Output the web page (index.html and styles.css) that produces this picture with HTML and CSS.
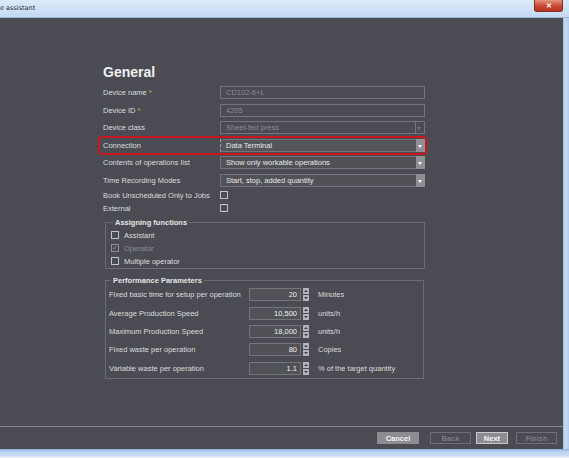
FILE: index.html
```html
<!DOCTYPE html>
<html lang="en">
<head>
    <meta charset="UTF-8">
    <title>Device assistant</title>
    <link rel="stylesheet" href="styles.css">
</head>
<body>

    <div class="titlebar">
        <span class="title">e assistant</span>
        <span class="close">&#x2715;</span>
    </div>

    <div class="middle">
        <div class="client">
            <div class="page">
                <h1>General</h1>

                <div class="row">
                    <label>Device name <span class="req">*</span></label>
                    <div class="field disabled">CD102-6+L</div>
                </div>
                <div class="row">
                    <label>Device ID <span class="req">*</span></label>
                    <div class="field disabled">4205</div>
                </div>
                <div class="row">
                    <label>Device class</label>
                    <div class="field select disabled">Sheet-fed press<span class="arrow"></span></div>
                </div>
                <div class="row flagged">
                    <label>Connection</label>
                    <div class="field select focus">Data Terminal<span class="arrow"></span></div>
                </div>
                <div class="row">
                    <label>Contents of operations list</label>
                    <div class="field select">Show only workable operations<span class="arrow"></span></div>
                </div>
                <div class="row last-field">
                    <label>Time Recording Modes</label>
                    <div class="field select">Start, stop, added quantity<span class="arrow"></span></div>
                </div>
                <div class="row check-row">
                    <label>Book Unscheduled Only to Jobs</label>
                    <span class="box"></span>
                </div>
                <div class="row check-row">
                    <label>External</label>
                    <span class="box"></span>
                </div>

                <fieldset class="group functions">
                    <legend>Assigning functions</legend>
                    <div class="check"><span class="box"></span>Assistant</div>
                    <div class="check dim"><span class="box checked">&#x2713;</span>Operator</div>
                    <div class="check"><span class="box"></span>Multiple operator</div>
                </fieldset>

                <fieldset class="group params">
                    <legend>Performance Parameters</legend>
                    <div class="param">
                        <label>Fixed basic time for setup per operation</label>
                        <div class="num">20</div>
                        <div class="spin"><span class="up"></span><span class="down"></span></div>
                        <span class="unit">Minutes</span>
                    </div>
                    <div class="param">
                        <label>Average Production Speed</label>
                        <div class="num">10,500</div>
                        <div class="spin"><span class="up"></span><span class="down"></span></div>
                        <span class="unit">units/h</span>
                    </div>
                    <div class="param">
                        <label>Maximum Production Speed</label>
                        <div class="num">18,000</div>
                        <div class="spin"><span class="up"></span><span class="down"></span></div>
                        <span class="unit">units/h</span>
                    </div>
                    <div class="param">
                        <label>Fixed waste per operation</label>
                        <div class="num">80</div>
                        <div class="spin"><span class="up"></span><span class="down"></span></div>
                        <span class="unit">Copies</span>
                    </div>
                    <div class="param">
                        <label>Variable waste per operation</label>
                        <div class="num">1.1</div>
                        <div class="spin"><span class="up"></span><span class="down"></span></div>
                        <span class="unit">% of the target quantity</span>
                    </div>
                </fieldset>
            </div>

            <div class="footer">
                <button class="btn filled cancel">Cancel</button>
                <button class="btn ghost back">Back</button>
                <button class="btn filled next">Next</button>
                <button class="btn ghost finish">Finish</button>
            </div>
        </div>
        <div class="frame-right"></div>
    </div>

    <div class="frame-bottom"></div>

</body>
</html>
```

FILE: styles.css
```css
body {
    margin: 0;
    width: 569px;
    height: 458px;
    overflow: hidden;
    display: flex;
    flex-direction: column;
    font-family: "Liberation Sans", Arial, sans-serif;
    font-size: 7.5px;
    color: #dcdcdc;
    background-color: #bcd4f0;
}

/* window chrome */
.titlebar {
    height: 17px;
    flex: none;
    display: flex;
    align-items: center;
    justify-content: space-between;
    padding-right: 6px;
    background: linear-gradient(to bottom, #dceafa, #c3d9f3);
    border-bottom: 1px solid #9fb8d6;
}

.title {
    color: #1e2a3a;
    font-family: "DejaVu Sans", sans-serif;
    font-size: 6.5px;
    margin-bottom: 1px;
}

.close {
    align-self: flex-start;
    width: 27px;
    height: 11px;
    display: flex;
    align-items: center;
    justify-content: center;
    color: #fff;
    font-size: 7px;
    font-weight: bold;
    background: linear-gradient(to bottom, #e5957f, #c8452f 55%, #b8361f);
    border: 1px solid #7a2f22;
    border-top: none;
    border-radius: 0 0 3px 3px;
}

.middle {
    flex: 1;
    display: flex;
    min-height: 0;
}

.frame-right {
    width: 6px;
    background: linear-gradient(to right, #9fb8d6, #c6dbf3 30%, #b5cdea);
}

.frame-bottom {
    height: 9px;
    flex: none;
    background: linear-gradient(to bottom, #8fb0da, #bcd4f0 30%, #c7dbf3 70%, #f3f6fa);
}

.client {
    width: 563px;
    display: flex;
    flex-direction: column;
    background-color: #4b4b53;
}

/* page */
.page {
    flex: 1;
    min-height: 0;
    padding: 46px 0 0 103px;
}

h1 {
    margin: 0 0 6px;
    height: 16px;
    font-size: 14px;
    line-height: 16px;
    font-weight: bold;
    color: #f0f0f0;
}

.row {
    display: flex;
    align-items: center;
    height: 13px;
    width: 322px;
    margin-bottom: 4.6px;
}

.row.last-field {
    margin-bottom: 2px;
}

.row label {
    width: 117px;
    flex: none;
}

.req {
    color: #e0a53a;
}

.field {
    position: relative;
    width: 205px;
    height: 13px;
    box-sizing: border-box;
    padding-left: 5px;
    line-height: 11px;
    color: #e8e8e8;
    background-color: #515158;
    border: 1px solid #74747b;
}

.field.disabled {
    color: #8a8a90;
    background-color: #4b4b53;
}

.field.focus {
    border: 1px solid #74747b;
    border-left: 1px dashed #a0a0a6;
    background-color: #55555c;
}

.arrow {
    position: absolute;
    top: -1px;
    right: -1px;
    width: 9px;
    height: 13px;
    background-color: #8f8f95;
}

.arrow::after {
    content: "";
    position: absolute;
    left: 2px;
    top: 6px;
    border-left: 2.5px solid transparent;
    border-right: 2.5px solid transparent;
    border-top: 3px solid #fff;
}

.disabled .arrow {
    top: 0;
    right: 0;
    height: 11px;
    background-color: #4b4b53;
    border-left: 1px solid #74747b;
    box-sizing: border-box;
}

.disabled .arrow::after {
    border-top-color: #74747b;
    left: 1px;
    top: 5px;
}

.flagged {
    position: relative;
}

.flagged::after {
    content: "";
    position: absolute;
    top: -3px;
    bottom: -3px;
    left: -5px;
    right: -2px;
    border: 2px solid #c8171e;
    border-radius: 4px;
}

.check-row {
    margin-bottom: 0;
}

.box {
    width: 8px;
    height: 8px;
    box-sizing: border-box;
    border: 1px solid #c4c4c8;
    display: inline-flex;
    align-items: center;
    justify-content: center;
    flex: none;
}

/* group boxes */
.group {
    margin: 0 0 0 2px;
    width: 320px;
    box-sizing: border-box;
    border: 1px solid #6c6c73;
    padding: 0;
}

.group legend {
    padding: 0 2px;
    margin-left: 2px;
    font-weight: bold;
    line-height: 9px;
    color: #e6e6e6;
}

.functions {
    margin-top: 3px;
    padding: 2px 0 0 5px;
}

.check {
    display: flex;
    align-items: center;
    gap: 5px;
    height: 13px;
}

.check.dim {
    color: #8e8e94;
}

.box.checked {
    border-color: #8e8e94;
    color: #8e8e94;
    font-size: 7px;
}

.params {
    margin-top: 7px;
    padding: 3.5px 0 3px 3px;
    width: 319px;
}

.param {
    display: flex;
    align-items: center;
    height: 13px;
    margin-bottom: 5.3px;
}

.param:last-child {
    margin-bottom: 0;
}

.param label {
    width: 140px;
    flex: none;
}

.num {
    width: 52px;
    height: 13px;
    box-sizing: border-box;
    padding-right: 3px;
    text-align: right;
    line-height: 11px;
    color: #f0f0f0;
    background-color: #515158;
    border: 1px solid #74747b;
}

.spin {
    margin-left: 2px;
    width: 6px;
    height: 13px;
    display: flex;
    flex-direction: column;
    gap: 1px;
}

.spin span {
    position: relative;
    flex: 1;
    background-color: #b4b4b8;
}

.spin span::after {
    content: "";
    position: absolute;
    left: 1px;
    border-left: 2px solid transparent;
    border-right: 2px solid transparent;
}

.spin .up::after {
    top: 2px;
    border-bottom: 2px solid #3a3a40;
}

.spin .down::after {
    top: 2px;
    border-top: 2px solid #3a3a40;
}

.unit {
    margin-left: 9px;
}

/* buttons */
.footer {
    height: 23px;
    flex: none;
    box-sizing: border-box;
    border-top: 1px solid #86868c;
    display: flex;
    align-items: flex-start;
    justify-content: flex-end;
    padding: 5px 6px 0 0;
}

.btn {
    height: 12px;
    padding: 0;
    font-family: inherit;
    font-size: 7.5px;
    font-weight: bold;
    border: 1px solid #6e6e75;
    background: transparent;
    color: #7c7c82;
}

.btn.filled {
    color: #f4f4f4;
    background-color: #8c8c91;
}

.cancel {
    width: 42px;
    border-color: #8c8c91;
}

.back {
    width: 41px;
    margin-left: 11px;
}

.next {
    width: 32px;
    margin-left: 5px;
    border-color: #c8c8cc;
}

.finish {
    width: 41px;
    margin-left: 8px;
}
```
